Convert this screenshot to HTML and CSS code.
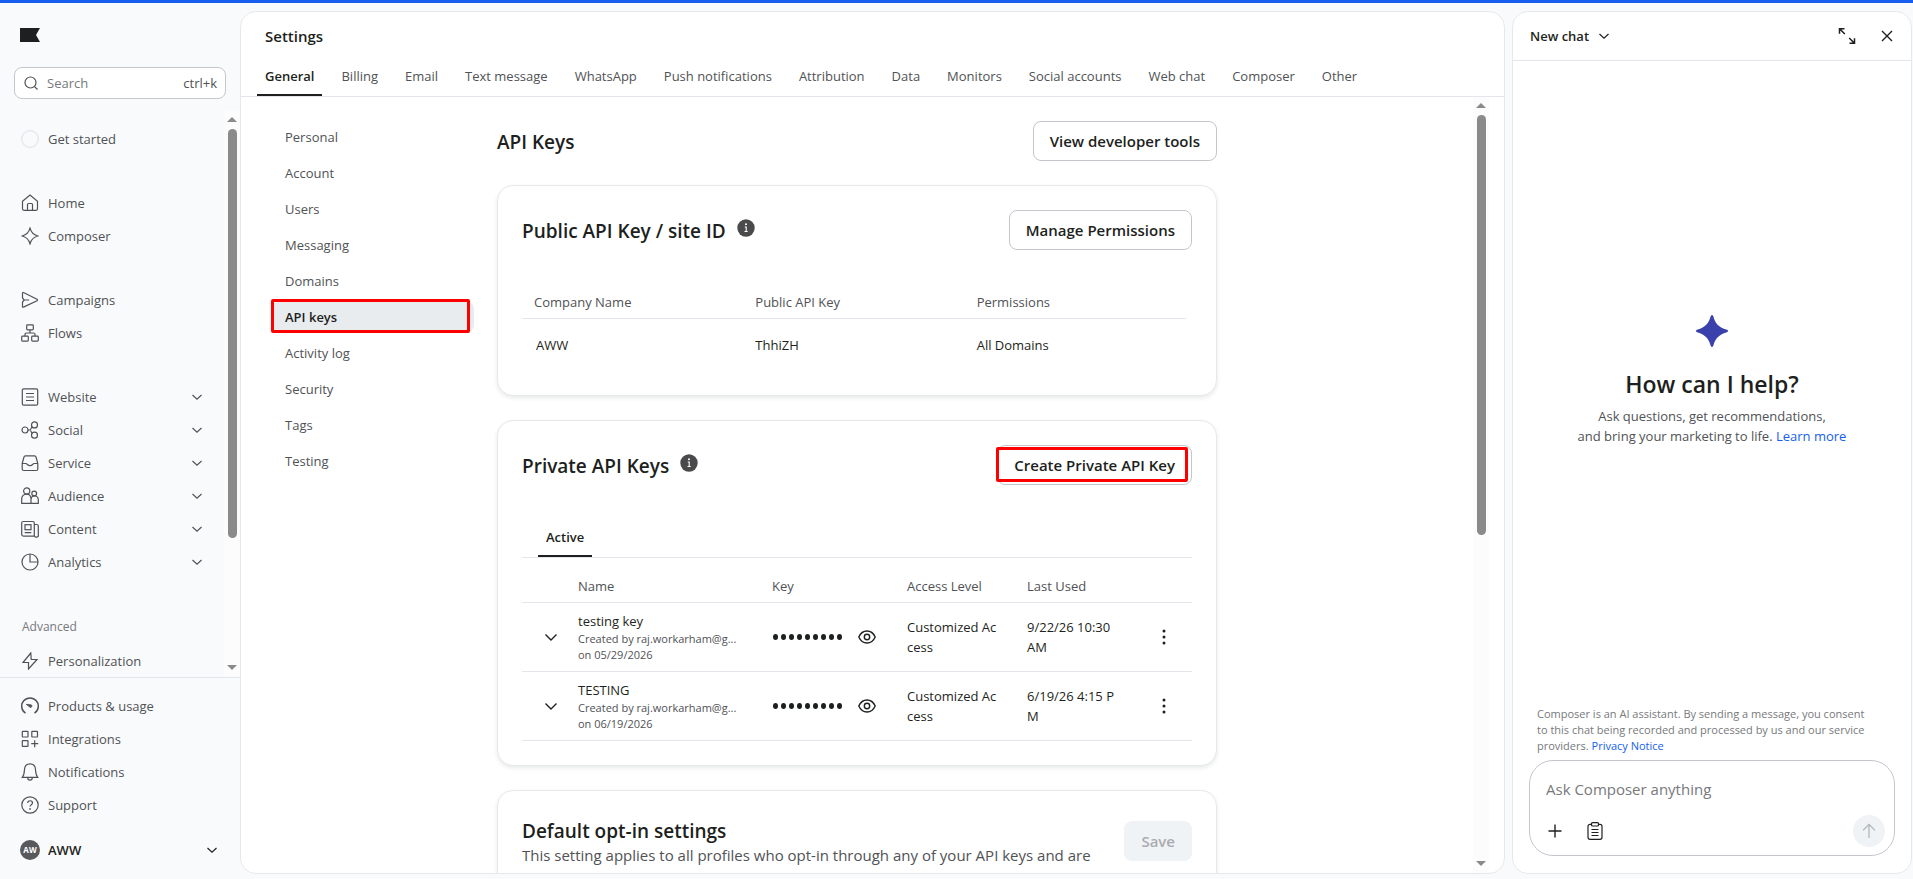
FILE: index.html
```html
<!DOCTYPE html>
<html lang="en">
<head>
<meta charset="utf-8">
<title>Settings – API Keys</title>
<link rel="stylesheet" href="styles.css">
</head>
<body>
<svg class="defs" aria-hidden="true">
  <symbol id="chev" viewBox="0 0 18 18"><path d="M4.500 7L9 11.200 13.500 7"/></symbol>
  <symbol id="chev-lg" viewBox="0 0 18 18"><path d="M3.500 6.500L9 12l5.500-5.500"/></symbol>
  <symbol id="info" viewBox="0 0 18 18"><circle cx="9" cy="9" r="8.700" fill="#4a4a4c" stroke="none"/><path d="M7.800 8h1.400v4.500M7.500 12.500h3.200" stroke="#fff" stroke-width="1.100"/><circle cx="9" cy="5.300" r="1" fill="#fff" stroke="none"/></symbol>
  <symbol id="eye" viewBox="0 0 18 18"><path d="M.8 9C2.500 5.200 5.500 3 9 3s6.500 2.200 8.200 6c-1.700 3.800-4.700 6-8.200 6S2.500 12.800.8 9z"/><circle cx="9" cy="9" r="2.700"/></symbol>
  <symbol id="dots" viewBox="0 0 18 18"><g fill="currentColor" stroke="none"><circle cx="9" cy="3" r="1.500"/><circle cx="9" cy="9" r="1.500"/><circle cx="9" cy="15" r="1.500"/></g></symbol>
  <symbol id="spark" viewBox="0 0 18 18"><path d="M9 1.200C10 5 13 8 16.800 9 13 10 10 13 9 16.800 8 13 5 10 1.200 9 5 8 8 5 9 1.200z"/></symbol>
</svg>
<div class="topbar"></div>
<div class="app">
  <aside class="sidebar">
    <a class="logo" href="#" aria-label="Home page"><svg viewBox="0 0 20 14"><path d="M0 0h20l-4 7 4 7H0z" fill="#1d1f20" stroke="none"/></svg></a>
    <label class="search"><svg class="icon" viewBox="0 0 18 18"><circle cx="8.500" cy="8.500" r="5.500"/><path d="M12.600 12.600l2.900 2.900"/></svg><input type="text" placeholder="Search" aria-label="Search"><kbd>ctrl+k</kbd></label>
    <div class="scroller">
      <nav class="nav" aria-label="Primary">
        <div class="group"><a href="#"><svg class="icon faint" viewBox="0 0 18 18"><circle cx="9" cy="9" r="8.300"/></svg>Get started</a></div>
        <div class="group">
          <a href="#"><svg class="icon" viewBox="0 0 18 18"><path d="M1.500 7.200L9 1l7.500 6.200v7.600a1.500 1.500 0 0 1-1.500 1.500H3a1.500 1.500 0 0 1-1.500-1.500zM6.500 16.300V10.500a1 1 0 0 1 1-1h3a1 1 0 0 1 1 1v5.800"/></svg>Home</a>
          <a href="#"><svg class="icon"><use href="#spark"/></svg>Composer</a>
        </div>
        <div class="group">
          <a href="#"><svg class="icon" viewBox="0 0 18 18"><path d="M1.500 2.500v4.500L3.200 9l-1.700 2v4.500q0 1 1 .6L16 9.800q1-.8 0-1.600L2.500 1.500q-1-.2-1 1zM3.200 9h5"/></svg>Campaigns</a>
          <a href="#"><svg class="icon" viewBox="0 0 18 18"><rect x="5.700" y=".8" width="6.600" height="5" rx=".8"/><rect x=".7" y="12.200" width="6.600" height="4.900" rx=".8"/><rect x="10.700" y="12.200" width="6.600" height="4.900" rx=".8"/><path d="M9 5.800V9M4 12.200V10.500A1.500 1.500 0 0 1 5.500 9h7a1.500 1.500 0 0 1 1.500 1.500v1.700"/></svg>Flows</a>
        </div>
        <div class="group">
          <a href="#"><svg class="icon" viewBox="0 0 18 18"><rect x="1.300" y=".8" width="15.400" height="16.400" rx="1.500"/><path d="M5 5.500h8M5 9h8M5 12.500h8"/></svg>Website<svg class="icon chev"><use href="#chev"/></svg></a>
          <a href="#"><svg class="icon" viewBox="0 0 18 18"><circle cx="4" cy="9" r="3"/><circle cx="13.500" cy="3.900" r="3"/><circle cx="13.500" cy="14.200" r="3"/><path d="M7 9h1.500c2 0 1.500-3 2.800-3.500M8.500 9c2 0 1.500 3 2.800 3.500"/></svg>Social<svg class="icon chev"><use href="#chev"/></svg></a>
          <a href="#"><svg class="icon" viewBox="0 0 18 18"><path d="M1.200 9.500L3 3a1.500 1.500 0 0 1 1.500-1.200h9A1.500 1.500 0 0 1 15 3l1.800 6.500V15a1.500 1.500 0 0 1-1.500 1.500H2.700A1.500 1.500 0 0 1 1.200 15zM1.200 9.500H5c1 0 1.500 2.200 4 2.200s3-2.200 4-2.200h3.800"/></svg>Service<svg class="icon chev"><use href="#chev"/></svg></a>
          <a href="#"><svg class="icon" viewBox="0 0 18 18"><circle cx="5.700" cy="4" r="3.100"/><circle cx="13.200" cy="6.500" r="2.400"/><path d="M.7 16.300V12c0-3 2-4.900 4.800-4.900S10 9 10 12v4.300zM10 16.300h7.300V13c0-2.500-1.300-4-3.700-4-2 0-3.600 1-3.600 4"/></svg>Audience<svg class="icon chev"><use href="#chev"/></svg></a>
          <a href="#"><svg class="icon" viewBox="0 0 18 18"><path d="M13.300 16.200H2.700A2 2 0 0 1 .7 14.200V3a1.500 1.500 0 0 1 1.500-1.500h9.600A1.500 1.500 0 0 1 13.300 3zM13.300 4.500h2.500A1.500 1.500 0 0 1 17.300 6v8.500a1.700 1.700 0 0 1-4 1.200M3.700 12.700h6.600"/><rect x="4" y="4.700" width="6" height="5"/></svg>Content<svg class="icon chev"><use href="#chev"/></svg></a>
          <a href="#"><svg class="icon" viewBox="0 0 18 18"><circle cx="9" cy="9" r="8"/><path d="M9 1v8h8"/></svg>Analytics<svg class="icon chev"><use href="#chev"/></svg></a>
        </div>
        <div class="group last">
          <h2>Advanced</h2>
          <a href="#"><svg class="icon" viewBox="0 0 18 18"><path d="M9.800 1L2 10.500h5.500L7.500 17 16 7.500h-5.800z"/></svg>Personalization</a>
        </div>
      </nav>
      <div class="bar"><i class="up"></i><i class="thumb side-thumb"></i><i class="down"></i></div>
    </div>
    <nav class="nav foot" aria-label="Account">
      <a href="#"><svg class="icon" viewBox="0 0 18 18"><path d="M4.500 16.200a8.300 8.300 0 1 1 9 0" stroke-width="1.500"/><path d="M5.200 7.300l4.600.5a1.300 1.300 0 1 1-1 2.300z" fill="currentColor" stroke-width=".8"/></svg>Products &amp; usage</a>
      <a href="#"><svg class="icon" viewBox="0 0 18 18"><rect x="1.300" y="1.300" width="5.700" height="5.700" rx=".5"/><rect x="10.800" y="1.300" width="5.700" height="5.700" rx=".5"/><rect x="1.300" y="10.700" width="5.700" height="5.700" rx=".5"/><path d="M13.700 10.200v7M10.200 13.700h7"/></svg>Integrations</a>
      <a href="#"><svg class="icon" viewBox="0 0 18 18"><path d="M1.300 14.300c2-2.300 2-4 2.200-7.800C3.700 3 6 .9 9 .9s5.300 2.100 5.500 5.600c.2 3.800.2 5.500 2.200 7.800zM6.700 14.500c0 3.500 4.600 3.500 4.600 0"/></svg>Notifications</a>
      <a href="#"><svg class="icon" viewBox="0 0 18 18"><circle cx="9" cy="9" r="8.200"/><path d="M6.700 7c0-3 4.800-3 4.800 0 0 1.600-2.500 1.800-2.500 3.500"/><circle cx="9" cy="12.900" r=".6" fill="currentColor" stroke-width=".6"/></svg>Support</a>
    </nav>
    <button class="account"><span class="avatar">AW</span><b>AWW</b><svg class="icon chev"><use href="#chev"/></svg></button>
  </aside>

  <main class="panel main">
    <h1>Settings</h1>
    <nav class="tabs" aria-label="Settings sections"><a class="on" href="#">General</a><a href="#">Billing</a><a href="#">Email</a><a href="#">Text message</a><a href="#">WhatsApp</a><a href="#">Push notifications</a><a href="#">Attribution</a><a href="#">Data</a><a href="#">Monitors</a><a href="#">Social accounts</a><a href="#">Web chat</a><a href="#">Composer</a><a href="#">Other</a></nav>
    <div class="body">
      <nav class="subnav" aria-label="General settings"><a href="#">Personal</a><a href="#">Account</a><a href="#">Users</a><a href="#">Messaging</a><a href="#">Domains</a><a class="on" href="#">API keys</a><a href="#">Activity log</a><a href="#">Security</a><a href="#">Tags</a><a href="#">Testing</a></nav>
      <div class="content">
        <header class="row"><h2>API Keys</h2><button class="btn">View developer tools</button></header>
        <section class="card">
          <header class="row"><h2>Public API Key / site ID <svg class="icon"><use href="#info"/></svg></h2><button class="btn">Manage Permissions</button></header>
          <table class="public">
            <thead><tr><th>Company Name</th><th>Public API Key</th><th>Permissions</th></tr></thead>
            <tbody><tr><td>AWW</td><td>ThhiZH</td><td>All Domains</td></tr></tbody>
          </table>
        </section>
        <section class="card">
          <header class="row"><h2>Private API Keys <svg class="icon"><use href="#info"/></svg></h2><span class="marked"><button class="btn">Create Private API Key</button></span></header>
          <div class="subtabs"><button class="on">Active</button></div>
          <table class="private">
            <colgroup><col class="c1"><col class="c2"><col class="c3"><col class="c4"><col class="c5"><col></colgroup>
            <thead><tr><th></th><th>Name</th><th>Key</th><th>Access Level</th><th>Last Used</th><th></th></tr></thead>
            <tbody>
              <tr><td><button class="expand" aria-label="Expand"><svg class="icon"><use href="#chev-lg"/></svg></button></td><td>testing key<small>Created by raj.workarham@g...<br>on 05/29/2026</small></td><td><div class="secret"><span class="mask"><i></i><i></i><i></i><i></i><i></i><i></i><i></i><i></i><i></i></span><button aria-label="Show key"><svg class="icon"><use href="#eye"/></svg></button></div></td><td>Customized Ac<br>cess</td><td>9/22/26 10:30<br>AM</td><td><button class="more" aria-label="More"><svg class="icon"><use href="#dots"/></svg></button></td></tr>
              <tr><td><button class="expand" aria-label="Expand"><svg class="icon"><use href="#chev-lg"/></svg></button></td><td>TESTING<small>Created by raj.workarham@g...<br>on 06/19/2026</small></td><td><div class="secret"><span class="mask"><i></i><i></i><i></i><i></i><i></i><i></i><i></i><i></i><i></i></span><button aria-label="Show key"><svg class="icon"><use href="#eye"/></svg></button></div></td><td>Customized Ac<br>cess</td><td>6/19/26 4:15 P<br>M</td><td><button class="more" aria-label="More"><svg class="icon"><use href="#dots"/></svg></button></td></tr>
            </tbody>
          </table>
        </section>
        <section class="card optin">
          <div><h2>Default opt-in settings</h2><p>This setting applies to all profiles who opt-in through any of your API keys and are</p></div>
          <button class="btn save" disabled>Save</button>
        </section>
      </div>
      <div class="bar main-bar"><i class="up"></i><i class="thumb main-thumb"></i><i class="down"></i></div>
    </div>
  </main>

  <aside class="panel chat">
    <header><button class="title">New chat <svg class="icon"><use href="#chev"/></svg></button>
      <button aria-label="Expand"><svg class="icon" viewBox="0 0 18 18"><path d="M6.500 1.700h-5v5M1.800 2l5 5M11.500 16.300h5v-5M16.200 16l-5-5" stroke-width="1.500"/></svg></button>
      <button aria-label="Close"><svg class="icon" viewBox="0 0 18 18"><path d="M4 4l10 10M14 4L4 14" stroke-width="1.400"/></svg></button></header>
    <div class="hello">
      <svg class="star" viewBox="0 0 34 34"><path d="M15.800 2q1.200-2.200 2.400 0c2 7 4.500 11 13.800 13.800q2.200 1.200 0 2.400C23 21 20.200 25 18.200 32q-1.200 2.200-2.400 0C13.800 25 11 21 2 18.200q-2.200-1.200 0-2.400C11 13 13.800 9 15.800 2z" fill="#3a41ac" stroke="none"/></svg>
      <h2>How can I help?</h2>
      <p>Ask questions, get recommendations,<br>and bring your marketing to life. <a href="#">Learn more</a></p>
    </div>
    <p class="legal">Composer is an AI assistant. By sending a message, you consent to this chat being recorded and processed by us and our service providers. <a href="#">Privacy Notice</a></p>
    <form class="ask">
      <input type="text" placeholder="Ask Composer anything" aria-label="Ask Composer anything">
      <div class="actions">
        <button type="button" aria-label="Add"><svg class="icon" viewBox="0 0 18 18"><path d="M9 2.500v13M2.500 9h13" stroke-width="1.400"/></svg></button>
        <button type="button" aria-label="Prompts"><svg class="icon" viewBox="0 0 18 18"><rect x="2" y="2.300" width="14" height="15" rx="2"/><rect x="5.500" y=".7" width="7" height="3.300" rx="1" fill="#fff"/><path d="M5.500 7.500h7M5.500 10.500h7M5.500 13.500h7"/></svg></button>
        <button type="button" class="send" aria-label="Send" disabled><svg class="icon" viewBox="0 0 18 18"><path d="M9 16V2.500M3 8.300l6-6 6 6"/></svg></button>
      </div>
    </form>
  </aside>
</div>
</body>
</html>
```
FILE: styles.css
```css
* { box-sizing: border-box; }
html, body { height: 100%; }
body { margin: 0; display: flex; flex-direction: column; overflow: hidden; background: #f9fafc; color: #1d1f20; font: 13px/20px "Open Sans", "Noto Sans", sans-serif; }
h1, h2, p { margin: 0; font-weight: 600; }
p { font-weight: 400; }
a { color: inherit; text-decoration: none; }
button { padding: 0; border: 0; background: none; font: inherit; color: inherit; }
input { border: 0; outline: 0; padding: 0; min-width: 0; background: none; font: inherit; color: inherit; }
input::placeholder { color: #77797c; opacity: 1; }
.defs { display: none; }
.icon { display: block; flex: none; width: 18px; height: 18px; fill: none; stroke: currentColor; stroke-width: 1.2; }
.topbar { flex: none; height: 3px; background: #155eef; }
.app { flex: 1; min-height: 0; display: flex; }

.sidebar { flex: none; width: 240px; display: flex; flex-direction: column; color: #505255; }
.logo { margin: 25px 20px; width: 20px; height: 14px; }
.logo svg { display: block; }
.search { display: flex; align-items: center; gap: 7px; height: 32px; margin: 0 14px; padding: 0 8px 0 7px; border: 1px solid #c3c7cc; border-radius: 8px; background: #fff; }
.search input { flex: 1; }
.search kbd { font: inherit; }
.scroller { flex: 1; min-height: 0; display: flex; margin-top: 12px; border-bottom: 1px solid #e3e7eb; }
.nav { flex: 1; overflow: hidden; }
.nav a { display: flex; align-items: center; gap: 9px; height: 33px; padding: 0 18px 0 21px; }
.nav .chev { margin-left: auto; }
.group { padding-bottom: 31px; }
.group:first-child { padding-top: 11px; }
.nav h2 { padding: 0 22px 9px; font-size: 12px; font-weight: 400; line-height: 16px; color: #77797c; }
.nav .last { padding-top: 10px; }
.faint { color: #e3e5e8; }
.foot { flex: none; padding-top: 11px; }
.account { display: flex; align-items: center; gap: 8px; margin: 14px 19px 14px 20px; height: 30px; color: #1d1f20; }
.account b { font-weight: 600; }
.account .chev { margin-left: auto; }
.avatar { width: 20px; height: 20px; border-radius: 50%; background: #58595b; color: #fff; font-size: 8px; font-weight: 700; text-align: center; }

.bar { flex: none; width: 16px; display: flex; flex-direction: column; align-items: center; background: #fcfcfc; padding: 6px 0 7px; }
.bar .up, .bar .down { border: 5px solid transparent; border-top-width: 0; border-bottom: 5px solid #8a8a8a; }
.bar .down { border-bottom-width: 0; border-top: 5px solid #8a8a8a; margin-top: auto; }
.thumb { width: 9px; margin-top: 7px; border-radius: 5px; background: #8a8a8a; }
.side-thumb { height: 74%; }
.main-thumb { height: 55%; }

.panel { margin: 8px 0 5px; border: 1px solid #e6e9ec; border-radius: 16px; background: #fff; overflow: hidden; display: flex; flex-direction: column; }
.main { flex: 1; min-width: 0; }
.main h1 { padding: 14px 24px 9px; font-size: 15px; line-height: 20px; }
.tabs { display: flex; gap: 11px; padding: 0 16px; border-bottom: 1px solid #e3e7eb; color: #505255; }
.tabs a { padding: 11px 8px 8px; border-bottom: 2px solid transparent; white-space: nowrap; }
.tabs .on { border-color: #1d1f20; color: #1d1f20; font-weight: 600; }
.body { flex: 1; min-height: 0; display: flex; padding-right: 15px; }
.subnav { flex: none; width: 202px; margin: 24px 23px 0 31px; display: flex; flex-direction: column; gap: 4px; color: #505255; }
.subnav a { padding: 6px 13px; border-radius: 8px; }
.subnav .on { position: relative; background: #e9ecef; color: #1d1f20; font-weight: 600; }
.subnav .on::after { content: ""; position: absolute; inset: -2px 4px 0 -1px; border: 3px solid #ff0000; border-radius: 2px; }
.content { flex: none; width: 720px; min-height: 0; padding-top: 24px; display: flex; flex-direction: column; gap: 24px; }
.row { display: flex; justify-content: space-between; align-items: center; }
.content h2 { display: flex; gap: 11px; padding-top: 2px; font-size: 19px; line-height: 24px; }
.btn { height: 40px; padding: 0 16px; border: 1px solid #c3c7cc; border-radius: 8px; background: #fff; font-size: 15px; font-weight: 600; white-space: nowrap; }
.card { flex: none; padding: 24px; border: 1px solid #e6e9ec; border-radius: 16px; box-shadow: 0 2px 4px rgba(30, 40, 40, .1); background: #fff; }
table { border-collapse: collapse; table-layout: fixed; width: 100%; text-align: left; }
th { padding: 0; font-weight: 400; color: #505255; }
td { padding: 0; }
.public { width: 664px; margin-top: 36px; }
.public th { padding: 6px 12px; border-bottom: 1px solid #e3e7eb; }
.public td { padding: 16px 12px; }
.public td:first-child { padding-left: 14px; }
.marked { position: relative; }
.marked::after { content: ""; position: absolute; inset: 2px 4px 3px -1px; border: 3px solid #ff0000; border-radius: 2px; }
.subtabs { display: flex; margin-top: 32px; padding: 0 16px; border-bottom: 1px solid #e3e7eb; }
.subtabs .on { padding: 10px 8px 8px; border-bottom: 2px solid #1d1f20; font-weight: 600; }
.c1 { width: 56px; } .c2 { width: 194px; } .c3 { width: 135px; } .c4 { width: 120px; } .c5 { width: 121px; }
.private tr { border-bottom: 1px solid #e3e7eb; }
.private th { padding: 18px 0 6px; }
.private td { height: 69px; }
.private small { display: block; font-size: 11px; line-height: 16px; color: #505255; }
.private button { display: block; }
.private .expand { margin-left: 20px; }
.private .more { margin-left: 7px; }
.private .icon { stroke-width: 1.4; }
.secret { display: flex; align-items: center; gap: 16px; }
.mask { display: flex; gap: 3px; padding-left: 1px; }
.mask i { width: 5px; height: 6px; border-radius: 50%; background: #1d1f20; }
.optin { display: flex; justify-content: space-between; align-items: flex-start; min-height: 160px; }
.optin h2 { padding-top: 4px; }
.optin p { font-size: 15px; line-height: 24px; color: #505255; }
.save { margin-top: 6px; background: #f0f3f5; border-color: #f0f3f5; color: #a9acaf; }
.main-bar { margin-left: auto; }

.chat { flex: none; width: 400px; margin-left: 7px; margin-right: 1px; }
.chat header { display: flex; align-items: center; gap: 22px; height: 49px; padding: 0 15px 0 17px; border-bottom: 1px solid #e3e7eb; }
.title { display: flex; align-items: center; gap: 6px; margin-right: auto; font-weight: 600; }
.hello { flex: 1; display: flex; flex-direction: column; align-items: center; justify-content: center; padding-bottom: 7px; text-align: center; }
.star { width: 34px; height: 34px; }
.hello h2 { margin: 20px 0 6px; font-size: 23px; line-height: 32px; }
.hello p { color: #505255; }
.chat a { color: #155eef; }
.legal { padding: 0 40px 0 24px; font-size: 11px; line-height: 16px; color: #77797c; }
.legal a { display: inline-block; }
.ask { margin: 6px 16px 17px; height: 96px; border: 1px solid #c3c7cc; border-radius: 24px; padding: 18px 9px 8px 16px; display: flex; flex-direction: column; justify-content: space-between; }
.ask input { font-size: 15px; line-height: 20px; }
.actions { display: flex; align-items: center; gap: 22px; }
.send { display: grid; place-items: center; width: 32px; height: 32px; margin-left: auto; border-radius: 50%; background: #f0f3f5; color: #b0b3b6; }
```
